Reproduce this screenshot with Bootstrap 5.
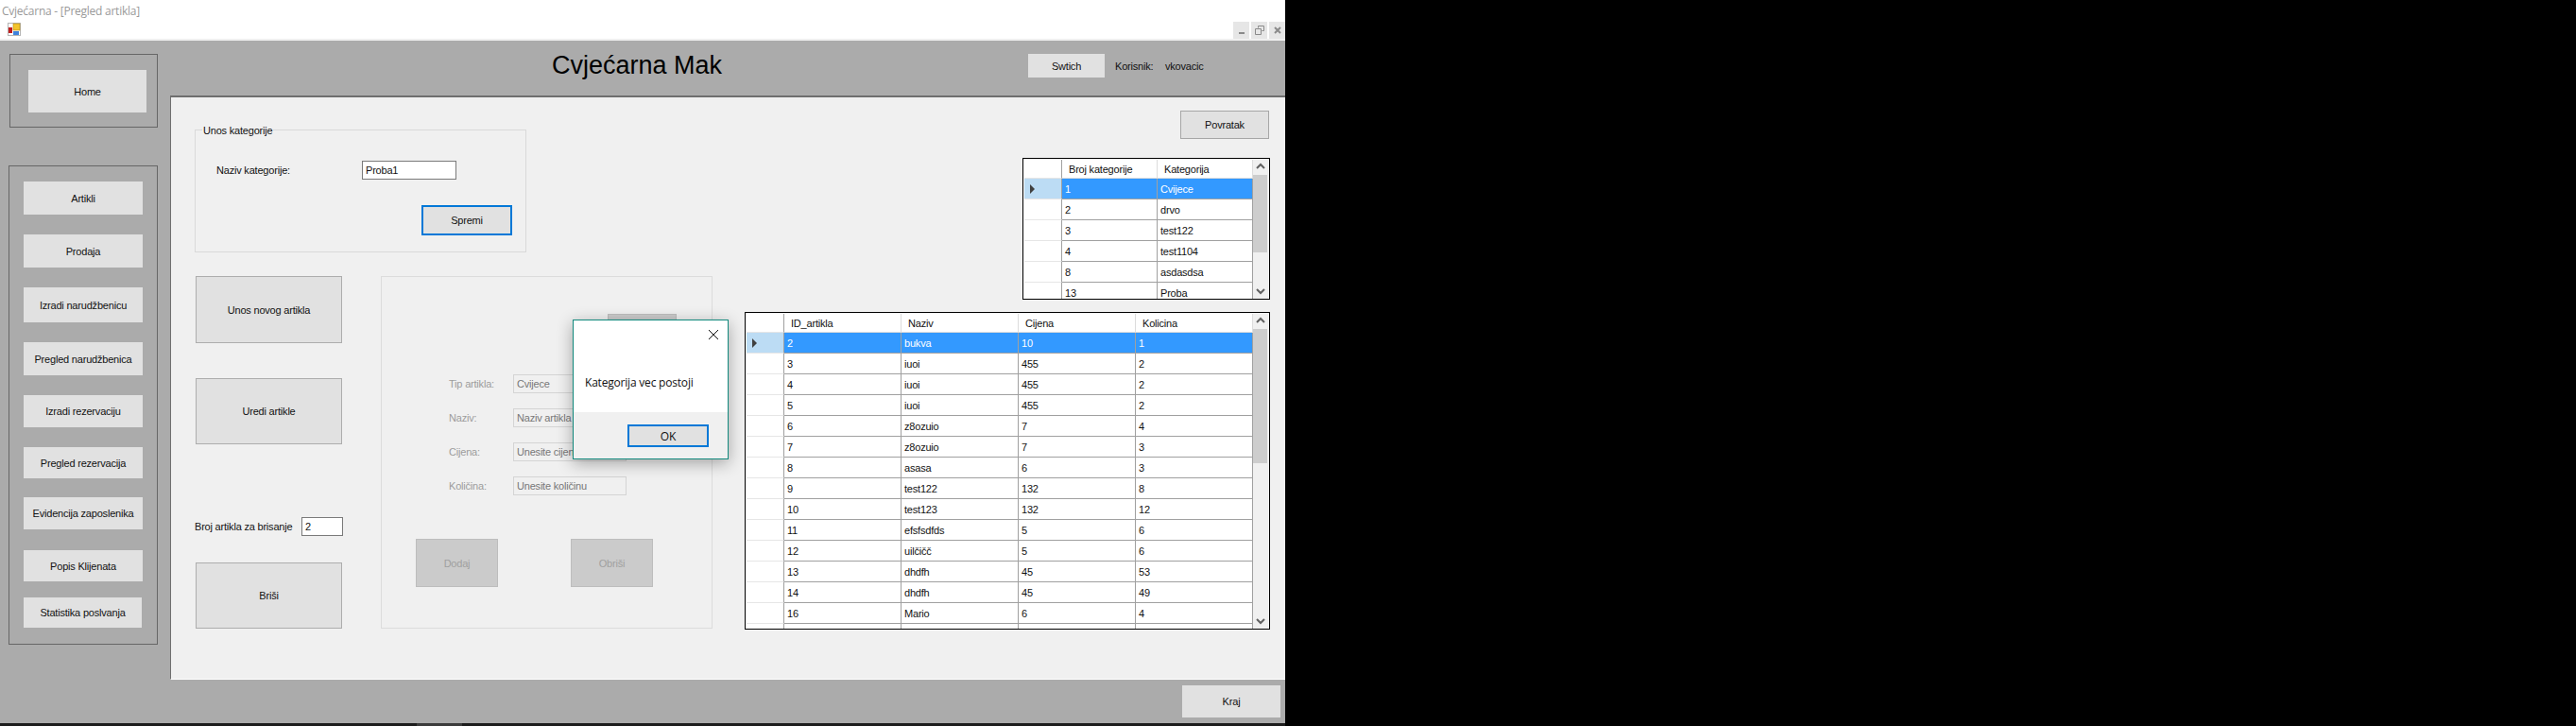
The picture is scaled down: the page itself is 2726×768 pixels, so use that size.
<!DOCTYPE html>
<html lang="en">
<head>
    <meta charset="UTF-8">
    <title>Cvjećarna - [Pregled artikla]</title>
    <link href="https://cdn.jsdelivr.net/npm/bootstrap@5.3.0/dist/css/bootstrap.min.css" rel="stylesheet">
    <style>
        body { background: #000; margin: 0; font: 11px "Liberation Sans", Arial, sans-serif; letter-spacing: -.2px; color: #111; }
        .app-win { width: 1360px; height: 765px; background: #ababab; position: relative; }
        .title-bar { height: 43px; background: #fff; border-bottom: 2px solid #f0f0f0; }
        .title-text { height: 24px; padding-left: 2px; font: 12px "Open Sans", "Noto Sans", sans-serif; letter-spacing: -.25px; color: #9a9a9a; line-height: 24px; }
        .mdi-row { height: 17px; padding-left: 8px; }
        .win-ctl { width: 17px; height: 18px; background: #e6e6e6; margin-right: 2px; margin-top: -1px; }
        .main-row { height: 676px; }
        .side-col { width: 180px; }
        .home-box { width: 157px; height: 78px; margin: 14px 0 0 10px; border: 1px solid #666; padding: 16px 0 0 19px; }
        .nav-box { width: 158px; height: 507px; margin: 40px 0 0 9px; border: 1px solid #666; padding: 16px 0 0 15px; }
        .wf-btn { background: #e1e1e1; border: 0; border-radius: 0; padding: 0; font: 11px "Liberation Sans", Arial, sans-serif; letter-spacing: -.2px; color: #111; display: flex; align-items: center; justify-content: center; }
        .wf-btn:hover, .wf-btn:active { background: #e1e1e1; color: #111; }
        .home-btn { width: 125px; height: 45px; }
        .nav-btn { width: 126px; height: 35px; margin-bottom: 21px; }
        .nav-btn:nth-child(3) { height: 37px; }
        .nav-btn:nth-child(5) { height: 34px; }
        .nav-btn:nth-child(6) { height: 33px; margin-bottom: 20px; }
        .nav-btn:nth-child(7) { height: 34px; margin-bottom: 22px; }
        .nav-btn:nth-child(8) { height: 33px; margin-bottom: 17px; }
        .nav-btn:nth-child(9) { height: 32px; width: 125px; }
        .right-col { width: 1180px; }
        .head-bar { height: 60px; border-bottom: 2px solid #6e6e6e; padding-bottom: 5px; }
        .head-title { width: 908px; padding-left: 404px; font-size: 27px; letter-spacing: 0; color: #000; }
        .switch-btn { width: 81px; height: 25px; }
        .user-label { width: 53px; margin-left: 11px; }
        .work-area { height: 616px; background: #f0f0f0; border-left: 1px solid #6e6e6e; border-bottom: 1px solid #fff; padding: 14px 0 0 25px; }
        .col-a { width: 548px; margin-top: 20px; }
        .col-b { width: 556px; margin-left: 34px; }
        .group-box { width: 351px; height: 130px; border: 1px solid #d9d9d9; position: relative; padding: 32px 14px 0 22px; }
        .group-legend { position: absolute; left: 7px; top: -6px; background: #f0f0f0; padding: 0 1px; }
        .cat-label { width: 154px; }
        .wf-input.form-control { height: 20px; min-height: 0; width: 100px; padding: 0 3px; border: 1px solid #7a7a7a; border-radius: 0; font: 11px "Liberation Sans", Arial, sans-serif; letter-spacing: -.2px; color: #111; background: #fff; box-shadow: none; }
        .save-btn { width: 96px; height: 32px; margin: 27px 0 0 auto; border: 2px solid #0078d7; }
        .save-btn:hover { border: 2px solid #0078d7; }
        .lower-row { margin-top: 25px; }
        .btn-col { width: 197px; }
        .big-btn { width: 155px; height: 71px; margin-left: 1px; border: 1px solid #adadad; }
        .big-btn:hover { border: 1px solid #adadad; }
        .edit-gap { margin-top: 37px; height: 70px; }
        .del-row { margin-top: 77px; width: 157px; }
        .del-row .wf-input.form-control { width: 44px; }
        .del-gap { margin-top: 28px; height: 70px; }
        .off-panel { width: 351px; height: 373px; border: 1px solid #dcdcdc; color: #9c9c9c; }
        .off-btn { width: 87px; height: 51px; background: #cbcbcb; border: 1px solid #bdbdbd; color: #a0a0a0; }
        .off-btn:hover { background: #cbcbcb; border: 1px solid #bdbdbd; color: #a0a0a0; }
        .off-top { width: 73px; margin: 39px 0 13px 239px; }
        .off-row { height: 20px; margin: 0 0 16px 71px; }
        .off-label { width: 68px; }
        .off-panel .wf-input.form-control { width: 120px; color: #777; background: #f0f0f0; border: 1px solid #d4d4d4; }
        .off-btns { margin: 46px 0 0 36px; gap: 77px; }
        .return-btn { width: 94px; height: 30px; border: 1px solid #a6a6a6; margin-left: auto; margin-right: 1px; }
        .return-btn:hover { border: 1px solid #a6a6a6; }
        .data-grid { background: #fff; border: 1px solid #000; padding: 1px 1px 0 1px; overflow: hidden; margin-left: auto; }
        .cat-grid { width: 262px; height: 150px; margin-top: 20px; }
        .art-grid { width: 556px; height: 336px; margin-top: 13px; }
        .grid-table { table-layout: fixed; border-collapse: separate; border-spacing: 0; align-self: flex-start; }
        .grid-table th, .grid-table td { height: 22px; padding: 0 0 0 3px; border-right: 1px solid #a0a0a0; border-bottom: 1px solid #a0a0a0; font-weight: 400; white-space: nowrap; overflow: hidden; }
        .grid-table th { height: 20px; padding-left: 7px; border-right-color: #dcdcdc; border-bottom-color: #dcdcdc; }
        .grid-table .row-head { width: 40px; padding: 0; border-right-color: #a0a0a0; border-bottom-color: #e6e6e6; }
        .grid-table tr.picked td { background: #3399ff; color: #fff; }
        .grid-table tr.picked .row-head { background: #bcdcf4; }
        .row-arrow { display: block; width: 0; height: 0; margin-left: 6px; border-left: 5px solid #404040; border-top: 5px solid transparent; border-bottom: 5px solid transparent; }
        .grid-scroll { width: 16px; background: #f0f0f0; }
        .scroll-end { height: 16px; }
        .scroll-thumb { background: #cdcdcd; margin: 0 1px 0 0; }
        .cat-grid .scroll-thumb { height: 82px; }
        .art-grid .scroll-thumb { height: 142px; }
        .foot-bar { height: 46px; padding: 6px 5px 0 0; }
        .end-btn { width: 104px; height: 34px; }
        .task-strip { width: 1360px; height: 3px; background: #1c1c1c; }
        .task-strip span { display: block; width: 48px; height: 3px; margin-left: 441px; background: #3a3a3a; }
        .msg-box { position: absolute; left: 606px; top: 338px; width: 165px; height: 148px; background: #fff; border: 1px solid #12897d; box-shadow: 0 4px 16px rgba(0,0,0,.32); font: 12px "Open Sans", "Noto Sans", sans-serif; letter-spacing: -.2px; }
        .msg-close { height: 30px; padding: 10px 10px 0 0; }
        .msg-body { height: 67px; padding: 27px 0 0 12px; color: #111; }
        .msg-foot { height: 49px; background: #f0f0f0; padding: 13px 0 0 57px; }
        .ok-btn { width: 86px; height: 24px; border: 2px solid #0078d7; font: 12px "Open Sans", "Noto Sans", sans-serif; letter-spacing: 0; }
        .ok-btn:hover { border: 2px solid #0078d7; }
    </style>
</head>
<body>
    <div class="app-win d-flex flex-column">
        <div class="title-bar">
            <div class="title-text">Cvjećarna - [Pregled artikla]</div>
            <div class="mdi-row d-flex justify-content-between">
                <svg width="14" height="14" viewBox="0 0 14 14">
                    <rect x=".5" y=".5" width="13" height="13" fill="#fff" stroke="#b5b5b5"/>
                    <rect x="1" y="5" width="4" height="6" fill="#c11d1d"/>
                    <rect x="6" y="1" width="7" height="7" fill="#f3c42c" stroke="#b58a10" stroke-width=".6"/>
                    <rect x="6" y="9" width="6" height="4" fill="#3f82dc"/>
                </svg>
                <div class="d-flex">
                    <div class="win-ctl d-flex align-items-center justify-content-center">
                        <svg width="10" height="10" viewBox="0 0 10 10"><rect x="2" y="7" width="6" height="2" fill="#8a8a8a"/></svg>
                    </div>
                    <div class="win-ctl d-flex align-items-center justify-content-center">
                        <svg width="10" height="10" viewBox="0 0 10 10"><path d="M3.5 2.5V.5h6v5h-2M.5 3.5h6v6h-6z" fill="none" stroke="#8a8a8a"/></svg>
                    </div>
                    <div class="win-ctl d-flex align-items-center justify-content-center me-0">
                        <svg width="10" height="10" viewBox="0 0 10 10"><path d="M2 2l6 6M8 2L2 8" stroke="#8a8a8a" stroke-width="2"/></svg>
                    </div>
                </div>
            </div>
        </div>

        <div class="main-row d-flex">
            <!-- Lijevi meni -->
            <div class="side-col">
                <div class="home-box">
                    <button class="btn wf-btn home-btn">Home</button>
                </div>
                <div class="nav-box">
                    <button class="btn wf-btn nav-btn">Artikli</button>
                    <button class="btn wf-btn nav-btn">Prodaja</button>
                    <button class="btn wf-btn nav-btn">Izradi narudžbenicu</button>
                    <button class="btn wf-btn nav-btn">Pregled narudžbenica</button>
                    <button class="btn wf-btn nav-btn">Izradi rezervaciju</button>
                    <button class="btn wf-btn nav-btn">Pregled rezervacija</button>
                    <button class="btn wf-btn nav-btn">Evidencija zaposlenika</button>
                    <button class="btn wf-btn nav-btn">Popis Klijenata</button>
                    <button class="btn wf-btn nav-btn">Statistika poslvanja</button>
                </div>
            </div>

            <div class="right-col">
                <div class="head-bar d-flex align-items-center">
                    <div class="head-title">Cvjećarna Mak</div>
                    <button class="btn wf-btn switch-btn">Swtich</button>
                    <div class="user-label">Korisnik:</div>
                    <div>vkovacic</div>
                </div>

                <div class="work-area d-flex">
                    <div class="col-a">
                        <!-- Unos kategorije -->
                        <div class="group-box">
                            <span class="group-legend">Unos kategorije</span>
                            <div class="d-flex align-items-center">
                                <div class="cat-label">Naziv kategorije:</div>
                                <input class="form-control wf-input" value="Proba1">
                            </div>
                            <button class="btn wf-btn save-btn">Spremi</button>
                        </div>

                        <div class="lower-row d-flex">
                            <div class="btn-col">
                                <button class="btn wf-btn big-btn">Unos novog artikla</button>
                                <button class="btn wf-btn big-btn edit-gap">Uredi artikle</button>
                                <div class="del-row d-flex align-items-center justify-content-between">
                                    <span>Broj artikla za brisanje</span>
                                    <input class="form-control wf-input" value="2">
                                </div>
                                <button class="btn wf-btn big-btn del-gap">Briši</button>
                            </div>

                            <div class="off-panel">
                                <button class="btn wf-btn off-btn off-top"></button>
                                <div class="off-row d-flex align-items-center"><div class="off-label">Tip artikla:</div><input class="form-control wf-input" value="Cvijece" readonly></div>
                                <div class="off-row d-flex align-items-center"><div class="off-label">Naziv:</div><input class="form-control wf-input" value="Naziv artikla" readonly></div>
                                <div class="off-row d-flex align-items-center"><div class="off-label">Cijena:</div><input class="form-control wf-input" value="Unesite cijenu" readonly></div>
                                <div class="off-row d-flex align-items-center"><div class="off-label">Količina:</div><input class="form-control wf-input" value="Unesite količinu" readonly></div>
                                <div class="off-btns d-flex">
                                    <button class="btn wf-btn off-btn">Dodaj</button>
                                    <button class="btn wf-btn off-btn">Obriši</button>
                                </div>
                            </div>
                        </div>
                    </div>

                    <div class="col-b">
                        <button class="btn wf-btn return-btn">Povratak</button>
                        <div class="data-grid cat-grid d-flex justify-content-between" id="catGrid"></div>
                        <div class="data-grid art-grid d-flex justify-content-between" id="artGrid"></div>
                    </div>
                </div>
            </div>
        </div>

        <div class="foot-bar d-flex justify-content-end">
            <button class="btn wf-btn end-btn">Kraj</button>
        </div>

        <!-- Poruka -->
        <div class="msg-box">
            <div class="msg-close d-flex justify-content-end">
                <svg width="10" height="10" viewBox="0 0 10 10"><path d="M0 0l10 10M10 0L0 10" stroke="#111"/></svg>
            </div>
            <div class="msg-body">Kategorija vec postoji</div>
            <div class="msg-foot"><button class="btn wf-btn ok-btn">OK</button></div>
        </div>
    </div>
    <div class="task-strip"><span></span></div>

    <script src="https://cdn.jsdelivr.net/npm/bootstrap@5.3.0/dist/js/bootstrap.bundle.min.js"></script>
    <script>
        const chevronUp = '<svg width="10" height="16" viewBox="0 0 10 16"><path d="M1 9l4-4 4 4" fill="none" stroke="#606060" stroke-width="2"/></svg>';
        const chevronDown = '<svg width="10" height="16" viewBox="0 0 10 16"><path d="M1 6l4 4 4-4" fill="none" stroke="#606060" stroke-width="2"/></svg>';

        // Tablica + scrollbar za datagrid
        function buildGrid(id, colWidths, headers, rows) {
            let html = '<table class="grid-table"><colgroup><col style="width:40px">';
            colWidths.forEach(w => { html += `<col style="width:${w}px">`; });
            html += '</colgroup><tr><th class="row-head"></th>';
            headers.forEach(h => { html += `<th>${h}</th>`; });
            html += '</tr>';
            rows.forEach((r, i) => {
                html += `<tr class="${i === 0 ? 'picked' : ''}"><td class="row-head">${i === 0 ? '<span class="row-arrow"></span>' : ''}</td>`;
                r.forEach(c => { html += `<td>${c}</td>`; });
                html += '</tr>';
            });
            html += '</table><div class="grid-scroll d-flex flex-column">'
                + `<div class="scroll-end d-flex justify-content-center">${chevronUp}</div><div class="scroll-thumb"></div>`
                + `<div class="scroll-end d-flex justify-content-center mt-auto">${chevronDown}</div></div>`;
            document.getElementById(id).innerHTML = html;
        }

        buildGrid('catGrid', [101, 101], ['Broj kategorije', 'Kategorija'], [
            [1, 'Cvijece'], [2, 'drvo'], [3, 'test122'], [4, 'test1104'], [8, 'asdasdsa'], [13, 'Proba']
        ]);
        buildGrid('artGrid', [124, 124, 124, 124], ['ID_artikla', 'Naziv', 'Cijena', 'Kolicina'], [
            [2, 'bukva', 10, 1], [3, 'iuoi', 455, 2], [4, 'iuoi', 455, 2], [5, 'iuoi', 455, 2],
            [6, 'z8ozuio', 7, 4], [7, 'z8ozuio', 7, 3], [8, 'asasa', 6, 3], [9, 'test122', 132, 8],
            [10, 'test123', 132, 12], [11, 'efsfsdfds', 5, 6], [12, 'uilčičč', 5, 6], [13, 'dhdfh', 45, 53],
            [14, 'dhdfh', 45, 49], [16, 'Mario', 6, 4], ['', '', '', '']
        ]);
    </script>
</body>
</html>
